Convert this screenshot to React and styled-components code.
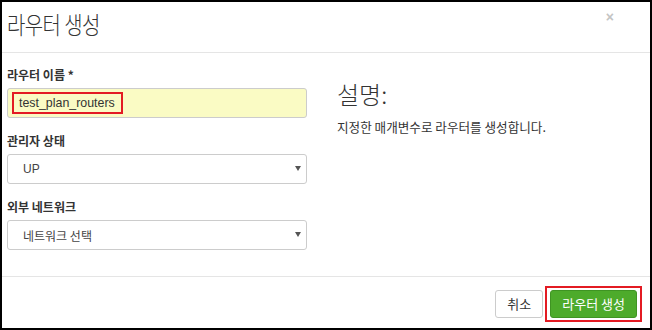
import React from 'react';
import styled, { createGlobalStyle } from 'styled-components';

const GlobalStyle = createGlobalStyle`
  html, body {
    margin: 0;
    padding: 0;
    background: #fff;
  }
  body {
    font-family: 'Liberation Sans', 'Noto Sans CJK KR', Arial, sans-serif;
    color: #333;
  }
`;

const Frame = styled.div`
  box-sizing: border-box;
  width: 652px;
  height: 330px;
  border: 2px solid #000;
  display: flex;
  flex-direction: column;
  background: #fff;
`;

const Header = styled.div`
  position: relative;
  height: 50px;
  border-bottom: 1px solid #e5e5e5;
  padding: 0 5px;
  display: flex;
  align-items: center;
`;

const Title = styled.h3`
  margin: 0;
  font-size: 20px;
  letter-spacing: -0.6px;
  font-weight: 300;
  color: #333;
  font-family: 'Noto Sans CJK KR', sans-serif;
  line-height: 1;
  padding-bottom: 4px;
  transform: scaleY(1.2);
  transform-origin: left center;
`;

const Close = styled.span`
  position: absolute;
  top: 7px;
  right: 36px;
  font-size: 14px;
  font-weight: bold;
  color: #c4c4c4;
  font-family: 'Liberation Sans', sans-serif;
`;

const Body = styled.div`
  flex: 1;
  display: flex;
  padding: 13px 5px 0;
  gap: 30px;
  border-bottom: 1px solid #e5e5e5;
`;

const Column = styled.div`
  width: 300px;
  display: flex;
  flex-direction: column;
`;

const Field = styled.div`
  margin-bottom: 14px;
`;

const Label = styled.div`
  font-size: 12px;
  font-weight: bold;
  color: #333;
  font-family: 'Noto Sans CJK KR', sans-serif;
  margin-bottom: 5px;
  height: 17px;
`;

const Input = styled.div`
  box-sizing: border-box;
  height: 30px;
  border: 1px solid #ccc;
  border-radius: 3px;
  background: ${(p) => (p.filled ? '#fafbc4' : '#fff')};
  display: flex;
  align-items: center;
  padding: 0 4px;
  position: relative;
  font-size: 12px;
  color: #333;
`;

const Highlight = styled.span`
  border: 2px solid #e31b23;
  padding: 2px 6px 2px 5px;
  font-family: 'Liberation Sans', Arial, sans-serif;
  font-size: 12.4px;
`;

const SelectText = styled.span`
  padding-left: 11px;
  font-family: ${(p) => (p.korean ? "'Noto Sans CJK KR', sans-serif" : "'Liberation Sans', Arial, sans-serif")};
  color: #444;
`;

const Caret = styled.span`
  position: absolute;
  right: 5px;
  top: 11px;
  width: 0;
  height: 0;
  border-left: 3px solid transparent;
  border-right: 3px solid transparent;
  border-top: 5px solid #555;
`;

const Side = styled.div`
  padding-top: 14px;
`;

const SideTitle = styled.h3`
  margin: 0 0 9px;
  font-size: 24px;
  font-weight: 300;
  font-family: 'Noto Sans CJK KR', sans-serif;
  color: #333;
  line-height: 28px;
`;

const SideText = styled.p`
  margin: 0;
  font-size: 12.6px;
  font-family: 'Noto Sans CJK KR', sans-serif;
  color: #333;
`;

const Footer = styled.div`
  height: 49px;
  display: flex;
  justify-content: flex-end;
  align-items: center;
  padding: 2px 8px 0 0;
  gap: 2px;
`;

const Button = styled.button`
  box-sizing: border-box;
  height: 28px;
  border-radius: 3px;
  font-size: 13px;
  font-family: 'Noto Sans CJK KR', sans-serif;
  padding: 0 11px;
  cursor: pointer;
  border: 1px solid ${(p) => (p.primary ? '#3f9423' : '#ccc')};
  background: ${(p) => (p.primary ? '#4dab2b' : '#fff')};
  color: ${(p) => (p.primary ? '#fff' : '#333')};
`;

const Outline = styled.span`
  display: inline-flex;
  border: 2px solid #e31b23;
  padding: 2px 3px;
`;

export default function App() {
  return (
    <>
      <GlobalStyle />
      <Frame>
        <Header>
          <Title>라우터 생성</Title>
          <Close>×</Close>
        </Header>
        <Body>
          <Column>
            <Field>
              <Label>라우터 이름 *</Label>
              <Input filled>
                <Highlight>test_plan_routers</Highlight>
              </Input>
            </Field>
            <Field>
              <Label>관리자 상태</Label>
              <Input>
                <SelectText>UP</SelectText>
                <Caret />
              </Input>
            </Field>
            <Field>
              <Label>외부 네트워크</Label>
              <Input>
                <SelectText korean>네트워크 선택</SelectText>
                <Caret />
              </Input>
            </Field>
          </Column>
          <Side>
            <SideTitle>설명:</SideTitle>
            <SideText>지정한 매개변수로 라우터를 생성합니다.</SideText>
          </Side>
        </Body>
        <Footer>
          <Button>취소</Button>
          <Outline>
            <Button primary>라우터 생성</Button>
          </Outline>
        </Footer>
      </Frame>
    </>
  );
}
